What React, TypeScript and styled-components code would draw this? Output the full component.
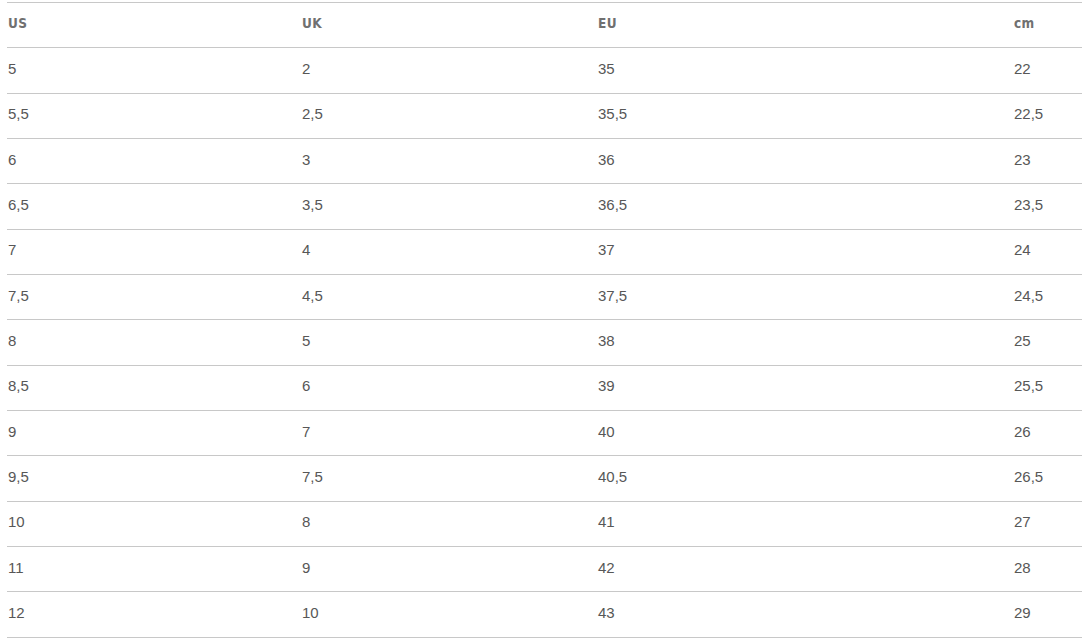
import styled, { createGlobalStyle } from "styled-components";

const GlobalStyle = createGlobalStyle`
  html, body {
    margin: 0;
    padding: 0;
    background: #ffffff;
  }
`;

const HEADERS = ["US", "UK", "EU", "cm"];

const ROWS: string[][] = [
  ["5", "2", "35", "22"],
  ["5,5", "2,5", "35,5", "22,5"],
  ["6", "3", "36", "23"],
  ["6,5", "3,5", "36,5", "23,5"],
  ["7", "4", "37", "24"],
  ["7,5", "4,5", "37,5", "24,5"],
  ["8", "5", "38", "25"],
  ["8,5", "6", "39", "25,5"],
  ["9", "7", "40", "26"],
  ["9,5", "7,5", "40,5", "26,5"],
  ["10", "8", "41", "27"],
  ["11", "9", "42", "28"],
  ["12", "10", "43", "29"],
];

const Page = styled.div`
  padding: 2px 1px 0 7px;
`;

const Table = styled.div`
  display: flex;
  flex-direction: column;
  border-top: 1px solid #c8c8c8;
`;

const Row = styled.div`
  display: grid;
  grid-template-columns: 294px 296px 416px 1fr;
  align-items: center;
  height: 44.33px;
  border-bottom: 1px solid #c8c8c8;
`;

const HeadCell = styled.div`
  padding: 0 0 5px 1px;
  font-family: "DejaVu Sans Condensed", "DejaVu Sans", sans-serif;
  font-stretch: condensed;
  font-weight: 700;
  font-size: 13.5px;
  color: #707070;
  letter-spacing: 0.03em;
`;

const Cell = styled.div`
  padding: 0 0 4px 1px;
  font-family: "Liberation Sans", Arial, sans-serif;
  font-size: 15px;
  color: #575757;
`;

export default function App() {
  return (
    <>
      <GlobalStyle />
      <Page>
        <Table>
          <Row>
            {HEADERS.map((h) => (
              <HeadCell key={h}>{h}</HeadCell>
            ))}
          </Row>
          {ROWS.map((r, i) => (
            <Row key={i}>
              {r.map((v, j) => (
                <Cell key={j}>{v}</Cell>
              ))}
            </Row>
          ))}
        </Table>
      </Page>
    </>
  );
}
